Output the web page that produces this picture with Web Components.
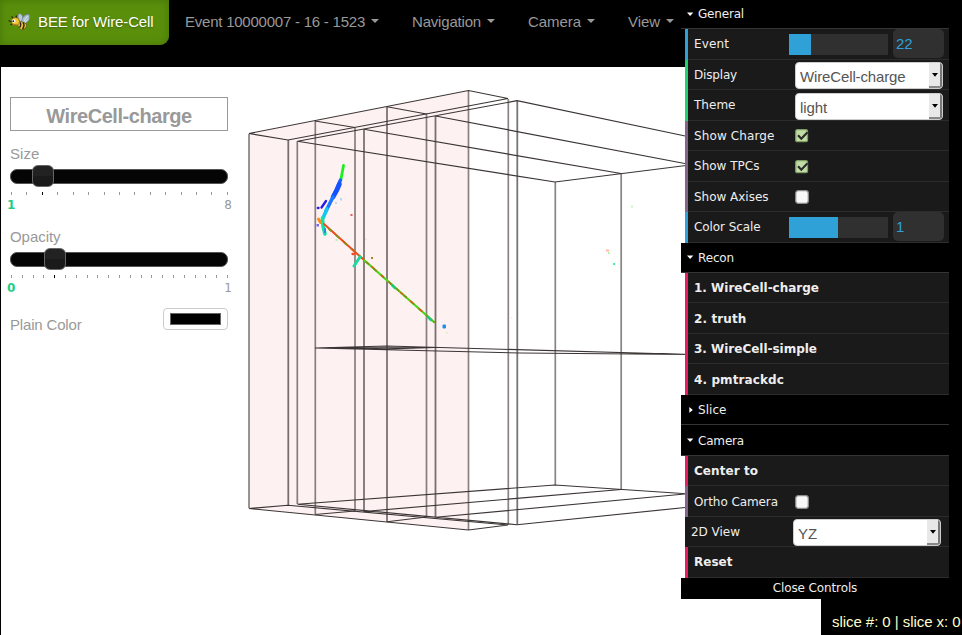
<!DOCTYPE html>
<html lang="en">
<head>
<meta charset="utf-8">
<title>BEE for Wire-Cell</title>
<style>
html,body{margin:0;padding:0;background:#000;overflow:hidden}
</style>
</head>
<body>
<bee-app></bee-app>
<script>
const define=(name,html,setup)=>{
  const t=document.createElement('template');
  t.innerHTML=html;
  customElements.define(name,class extends HTMLElement{
    constructor(){super();this.attachShadow({mode:'open'}).append(t.content.cloneNode(true));}
    connectedCallback(){if(setup)setup(this,this.shadowRoot);}
  });
};

/* Text whose letter spacing is adjusted to fill the given width. */
define('fit-text','<style>:host{display:inline-block;white-space:pre}span{display:inline-block}</style><span></span>',(el,r)=>{
  const s=r.querySelector('span');
  s.textContent=el.getAttribute('text');
  const n=s.textContent.length,w=+el.getAttribute('w');
  if(w&&n>1){
    const d=(w-s.getBoundingClientRect().width)/n;
    s.style.letterSpacing=d.toFixed(3)+'px';
  }
});

define('bee-logo',`<style>
:host{display:block;width:23px;height:18px}svg{display:block}
</style>
<svg width="23" height="18" viewBox="0 0 23 18">
<path d="M12 9C9 4 9.500 1 12 .8c2 0 3 3 3 7z" fill="#b8c8d2" stroke="#718591" stroke-width=".8"/>
<path d="M13.500 9C14 4 17.500 1 20.500 1.500c2.500 1.500.5 8.500-5 9.500z" fill="#a8bbcb" stroke="#76899a" stroke-width=".8"/>
<path d="M16 8l3.500-5M17 9l3.500-3" stroke="#dce7ee" stroke-width="1"/>
<path d="M9 9c4-1 10 .5 9.500 4-.5 2.500-3 3.500-5.500 4-1-2-4-4-4-8z" fill="#f1c936" stroke="#4a3b12" stroke-width=".6"/>
<path d="M12 9.500c1 1 1 4-.5 5M15 9.500c1.500 2 1 4.500-.5 6.500" fill="none" stroke="#2c2415" stroke-width="1.500"/>
<circle cx="7.500" cy="8.500" r="4" fill="#f0c52e" stroke="#6b5418" stroke-width=".6"/>
<circle cx="5.800" cy="8" r="1.800" fill="#fff"/><circle cx="5.300" cy="8.200" r=".9" fill="#222"/>
<path d="M5 5L3.500 3.500M8 4.500L8.500 2.500M3.500 9L.5 7.500M4 11l-1.500 1" stroke="#33280f" stroke-width="1.300"/>
<path d="M5.500 11c1 1 2 1 3 .3" fill="none" stroke="#a54720" stroke-width=".8"/>
</svg>`);

define('nav-menu',`<style>
:host{display:flex;align-items:center;height:44px;color:#999;margin-right:33px}
i{width:0;height:0;border:4px solid transparent;border-top-color:#999;border-bottom:0;margin-left:6px;margin-top:-2px}
</style><slot></slot><i></i>`);

define('bee-navbar',`<style>
:host{display:flex;height:67px;background:#000;font:15px/20px "Liberation Sans",sans-serif;align-items:flex-start}
.brand{display:flex;align-items:center;box-sizing:border-box;width:169px;height:45px;padding:0 0 1px 8px;gap:7px;color:#fff;background:#5a8f0c;border-radius:0 0 9px 0;box-shadow:inset 0 0 9px #467507;text-shadow:0 1px 2px rgba(0,0,0,.35);margin-right:16px}
</style>
<div class="brand"><bee-logo></bee-logo><fit-text text="BEE for Wire-Cell" w="115.500"></fit-text></div>
<nav-menu><fit-text text="Event 10000007 - 16 - 1523" w="180"></fit-text></nav-menu>
<nav-menu><fit-text text="Navigation" w="69"></fit-text></nav-menu>
<nav-menu><fit-text text="Camera" w="53"></fit-text></nav-menu>
<nav-menu><fit-text text="View" w="32"></fit-text></nav-menu>`);

define('range-slider',`<style>
:host{display:block;width:218px;height:83px;color:#999}
.name{height:20px;line-height:20px}
.track{display:flex;align-items:center;box-sizing:border-box;height:15px;margin-top:5px;background:#050505;border:1px solid #555;border-radius:7px}
.thumb{box-sizing:border-box;flex:none;width:22px;height:22px;border:1px solid #666;border-radius:6px;background:linear-gradient(#222 50%,#1a1a1a 50%);margin-left:calc(var(--at) - 1px);margin-top:-1px}
.ticks{display:flex;justify-content:space-between;margin:8px 0 0 1px;height:3px;width:217px}
.ticks i{width:1px;background:#999}.ticks i.on{background:#000}
.ends{display:flex;justify-content:space-between;margin:3px -4px 0 -3px;font:12px/14px "DejaVu Sans",sans-serif}
b{color:#1fce86}
</style>
<div class="name"><slot></slot></div><div class="track"><div class="thumb"></div></div>
<div class="ticks"></div><div class="ends"><b></b><span></span></div>`,(el,r)=>{
  const n=+el.getAttribute('steps'),on=+el.getAttribute('on');
  r.querySelector('.ticks').innerHTML=Array.from({length:n},(_,i)=>`<i${i===on?' class="on"':''}></i>`).join('');
  r.querySelector('b').textContent=el.getAttribute('min');
  r.querySelector('.ends span').textContent=el.getAttribute('max');
  el.style.setProperty('--at',el.getAttribute('at')+'px');
});

define('bee-sidebar',`<style>
:host{display:block;width:218px;padding:30px 0 0 9px;font:15px/20px "Liberation Sans",sans-serif;color:#999}
h1{box-sizing:border-box;height:34px;margin:0 0 13px;border:1px solid #999;font:bold 20px/36px "Liberation Sans",sans-serif;text-align:center}
.color{display:flex;justify-content:space-between;align-items:flex-start}
.color fit-text{margin-top:5px}
.well{box-sizing:border-box;width:65px;height:22px;margin-top:-2px;padding:4px 6px;border:1px solid #ccc;border-radius:4px}
.well i{display:block;box-sizing:border-box;height:12px;border:1px solid #666;background:#000}
</style>
<h1><fit-text text="WireCell-charge" w="145.500"></fit-text></h1>
<range-slider min="1" max="8" at="22" steps="15" on="2"><fit-text text="Size" w="29.500"></fit-text></range-slider>
<range-slider min="0" max="1" at="34" steps="21" on="4"><fit-text text="Opacity" w="50.500"></fit-text></range-slider>
<div class="color"><fit-text text="Plain Color" w="71.500"></fit-text><div class="well"><i></i></div></div>`);

/* Wireframe of the detector volumes with the reconstructed charge points. */
define('bee-scene',`<style>:host{display:block}svg{display:block}</style>
<svg width="962" height="635" viewBox="0 0 962 635">
<path d="M249 133.500L468.500 90.500V530L249 508.500z" fill="#fef1f1"/>
<g stroke="#3a3030" stroke-opacity=".6" stroke-width="1.700" fill="none">
<path d="M249 134V508M288.300 140V505M297.300 141V504M315.300 121V514M355 127.500V511M364 129V512M387 107V522M426.500 114V517M435.500 116V517M468.500 91V530M508.300 99V525M517.300 101V524.500M555.300 182V485M621.200 173.500V489"/>
<path d="M288.300 140V505M364 129V512M387 107V522M435.500 116V517M517.300 101V524" stroke-opacity=".2"/>
</g>
<g stroke="#3b3535" stroke-width="1.150" fill="none">
<path d="M249 133.500L468.500 90.500L508 98.500L288 140z"/>
<path d="M315 121L355 127.500M387 106.700L426.500 114M297.500 141.300L517 100.700L690 137M297.500 141.300L555 182L690 165M364 129.300L621 173.500M435.500 116L690 164.500"/>
<path d="M249 508.500L468.500 530L508 525L288 505.300z"/>
<path d="M315 514.500L355 511M387 521.800L426.500 517M297.500 504.300L517 524.700L690 507M297.500 504.300L555 485L690 494M364 511.500L621 489.500M435.500 517.300L690 493.500"/>
<path d="M315 348L387 346L690 354.500M315 348L520 353L690 354.500M315 348L435 347.500M340 348L387 349L435 347.500"/>
</g>
<g fill="none" stroke-linecap="round">
<path d="M343.500 165.500L341 179" stroke="#18f21c" stroke-width="2.800"/>
<path d="M340.500 180L333 197" stroke="#1565ff" stroke-width="3.500"/>
<path d="M339.500 184L337 190L333 197" stroke="#1552ff" stroke-width="4.600"/>
<path d="M333 197L326 211" stroke="#1979ff" stroke-width="3.600"/>
<path d="M327 209L323 218" stroke="#12c8f0" stroke-width="3.600"/>
<path d="M326 201L321.500 207.500M317.800 208H318.500" stroke="#2519e8" stroke-width="2.300"/>
<path d="M318.500 219L320.500 222.500" stroke="#ff8a18" stroke-width="3"/>
<path d="M322.500 218L323 226L325 234" stroke="#17dfa4" stroke-width="3.600"/>
<path d="M325 229V232" stroke="#218bd8" stroke-width="2"/>
<path d="M324 224L364 260" stroke="#ef4b25" stroke-width="2"/>
<path d="M364 260L434 322" stroke="#49d914" stroke-width="2.200"/>
<path d="M329 229L434 322" stroke="#7e9413" stroke-width="1.800" stroke-dasharray="3 7"/>
<path d="M333 232L434 322" stroke="#e95518" stroke-width="1.600" stroke-dasharray="2 11"/>
<path d="M392 285L395 288M428 317L431 320" stroke="#1fc878" stroke-width="2.500"/>
<path d="M360 257L354 266" stroke="#18dba2" stroke-width="3"/>
<path d="M352.500 254H354" stroke="#f24b25" stroke-width="2.300"/>
</g>
<g>
<rect x="442.500" y="324.500" width="3.500" height="4" rx="1" fill="#1b91ed"/>
<rect x="371" y="257" width="2" height="2" fill="#ad8125"/><rect x="350.500" y="214" width="2" height="2" fill="#ef5959"/>
<rect x="340" y="198" width="2" height="2.500" fill="#b7d6f2"/><rect x="335" y="202" width="2" height="2" fill="#b5ddf5"/>
<rect x="316.500" y="224" width="2.500" height="2.500" fill="#7569ed"/><rect x="335.500" y="239" width="2" height="2" fill="#bdf0b2"/>
<rect x="365" y="238.500" width="1.500" height="1.500" fill="#cdf2c4"/><rect x="446" y="332" width="1.500" height="1.500" fill="#d8edb4"/>
<rect x="631" y="205.500" width="2" height="2" fill="#b8ffae"/><rect x="606" y="249.500" width="3" height="2" fill="#ffb6a3"/>
<rect x="608" y="252" width="1.700" height="2" fill="#b4f79b"/><rect x="613" y="263" width="2.200" height="2" fill="#3bfb9b"/>
<rect x="511" y="317" width="1.500" height="1.500" fill="#eee"/>
</g>
</svg>`);

define('gui-title',`<style>
:host{display:flex;box-sizing:border-box;height:var(--row);align-items:center;background:#000;border-bottom:1px solid #353535;padding:1px 0 0 6px;color:#eee}
svg{width:7px;height:7px;margin-right:4px}
:host([closed]) path{d:path("M2 0L5 2.500L2 5z")}
</style><svg viewBox="0 0 6 6"><path d="M0 1.200H5.400L2.700 4.200z" fill="#fff"/></svg><slot></slot>`);

define('gui-row',`<style>
:host{display:flex;box-sizing:border-box;height:var(--row);margin-left:4px;align-items:center;background:linear-gradient(#2c2c2c,#2c2c2c) 0 100%/100% 1px no-repeat #1a1a1a;border-left:3px solid var(--c,#1a1a1a);padding:0 5px 1px 6px;color:#eee}
:host([kind=action]){--c:#e61d5f;font-weight:bold}
:host([kind=number]){--c:#2fa1d6}
:host([kind=list]){--c:#1ed36f}
:host([kind=flag]){--c:#806787}
:host([plain]){padding-left:3px}
.name{width:95px;flex:none;padding-top:1px}
:host([plain]) .name{width:96px}
</style><div class="name"><fit-text></fit-text></div><slot></slot>`,(el,r)=>{
  const f=r.querySelector('fit-text');
  const n=document.createElement('fit-text');
  n.setAttribute('text',el.getAttribute('name'));n.setAttribute('w',el.getAttribute('w'));
  f.replaceWith(n);
});

define('gui-number',`<style>
:host{display:flex;align-items:center;gap:5px}
.bar{width:99px;height:21px;background:#303030;margin-top:1px}
.bar i{display:block;height:100%;background:#2fa1d6}
.val{box-sizing:border-box;width:51px;height:29px;border-radius:5px;background:#303030;color:#2fa1d6;padding-left:3px;font:15px/30px "Liberation Sans",sans-serif}
</style><div class="bar"><i></i></div><div class="val"><slot></slot></div>`,(el,r)=>{r.querySelector('i').style.width=el.getAttribute('fill')+'px';});

define('gui-select',`<style>
:host{display:flex;box-sizing:border-box;width:148px;height:27px;margin:3px 0 0 6px;background:#fff;border:1px solid #ccc;border-radius:4px;color:#555;font:15px/28px "Liberation Sans",sans-serif;padding-left:4px;justify-content:space-between;overflow:hidden}
.btn{box-sizing:border-box;width:13px;height:25px;background:#e8e8e8;border-right:2px solid #777;border-bottom:2px solid #888;display:flex;align-items:center;justify-content:center;padding-top:1px}
svg{display:block}
</style><slot></slot><div class="btn"><svg width="6" height="4"><path d="M0 0H6L3 3.800z" fill="#000"/></svg></div>`);

define('gui-check',`<style>
:host{display:block;margin:2px 0 0 6px}svg{display:block}
.on{display:none}:host([checked]) .on{display:block}:host([checked]) .off{display:none}
</style>
<svg class="off" width="14" height="14"><rect x=".7" y=".7" width="12.600" height="12.600" rx="2.500" fill="#f7f7f7" stroke="#8b8b8b" stroke-width="1.300"/></svg>
<svg class="on" width="14" height="14"><rect x=".7" y=".7" width="11.800" height="12" rx="1.500" fill="#c2dca6" stroke="#7d9c61" stroke-width="1.300"/><path d="M3 6.300L6.300 9.800L12.500 3.200" fill="none" stroke="#292b2b" stroke-width="2.100"/></svg>`);

define('bee-controls',`<style>
:host{display:block;--row:30.47px;font:12px/16px "DejaVu Sans",sans-serif}
.panel{width:268px;margin-right:13px}
gui-title.first{height:29.25px;padding-bottom:1px}
.close{height:21px;line-height:20px;background:#000;color:#eee;text-align:center}
</style>
<div class="panel">
<gui-title class="first"><fit-text text="General" w="46"></fit-text></gui-title>
<gui-row kind="number" name="Event" w="35"><gui-number fill="22">22</gui-number></gui-row>
<gui-row kind="list" name="Display" w="43"><gui-select><fit-text text="WireCell-charge" w="105.500"></fit-text></gui-select></gui-row>
<gui-row kind="list" name="Theme" w="41.500"><gui-select><fit-text text="light" w="27"></fit-text></gui-select></gui-row>
<gui-row kind="flag" name="Show Charge" w="80.500"><gui-check checked></gui-check></gui-row>
<gui-row kind="flag" name="Show TPCs" w="65.500"><gui-check checked></gui-check></gui-row>
<gui-row kind="flag" name="Show Axises" w="74.500"><gui-check></gui-check></gui-row>
<gui-row kind="number" name="Color Scale" w="66.500"><gui-number fill="49">1</gui-number></gui-row>
<gui-title><fit-text text="Recon" w="36"></fit-text></gui-title>
<gui-row kind="action" name="1. WireCell-charge" w="125"></gui-row>
<gui-row kind="action" name="2. truth" w="52.500"></gui-row>
<gui-row kind="action" name="3. WireCell-simple" w="123"></gui-row>
<gui-row kind="action" name="4. pmtrackdc" w="90"></gui-row>
<gui-title closed><fit-text text="Slice" w="28.500"></fit-text></gui-title>
<gui-title><fit-text text="Camera" w="46"></fit-text></gui-title>
<gui-row kind="action" name="Center to" w="64"></gui-row>
<gui-row kind="flag" name="Ortho Camera" w="84"><gui-check></gui-check></gui-row>
<gui-row plain name="2D View" w="49"><gui-select><fit-text text="YZ" w="19"></fit-text></gui-select></gui-row>
<gui-row kind="action" name="Reset" w="38.500"></gui-row>
<div class="close"><fit-text text="Close Controls" w="84.500"></fit-text></div>
</div>`);

define('bee-status',`<style>
:host{display:block;box-sizing:border-box;width:141px;height:36px;background:#000;color:#ffc;padding-left:11px;font:15px/46px "Liberation Sans",sans-serif;overflow:hidden}
</style><fit-text text="slice #: 0 | slice x: 0" w="128.500"></fit-text>`);

define('bee-app',`<style>
:host{display:grid;grid-template:635px/962px;overflow:hidden;background:#000}
:host>*{grid-area:1/1}
.page{display:grid;grid-template-rows:67px 568px}
.stage{margin-left:1px;background:#fff}
.side{display:grid;grid-template-rows:599px 36px;justify-self:end;width:281px}
.edge{justify-self:end;width:13px;height:599px;background:#000}
bee-status{justify-self:end}
</style>
<div class="page"><bee-navbar></bee-navbar><div class="stage"><bee-sidebar></bee-sidebar></div></div>
<bee-scene></bee-scene>
<div class="edge"></div>
<div class="side"><bee-controls></bee-controls><bee-status></bee-status></div>`);
</script>
</body>
</html>
